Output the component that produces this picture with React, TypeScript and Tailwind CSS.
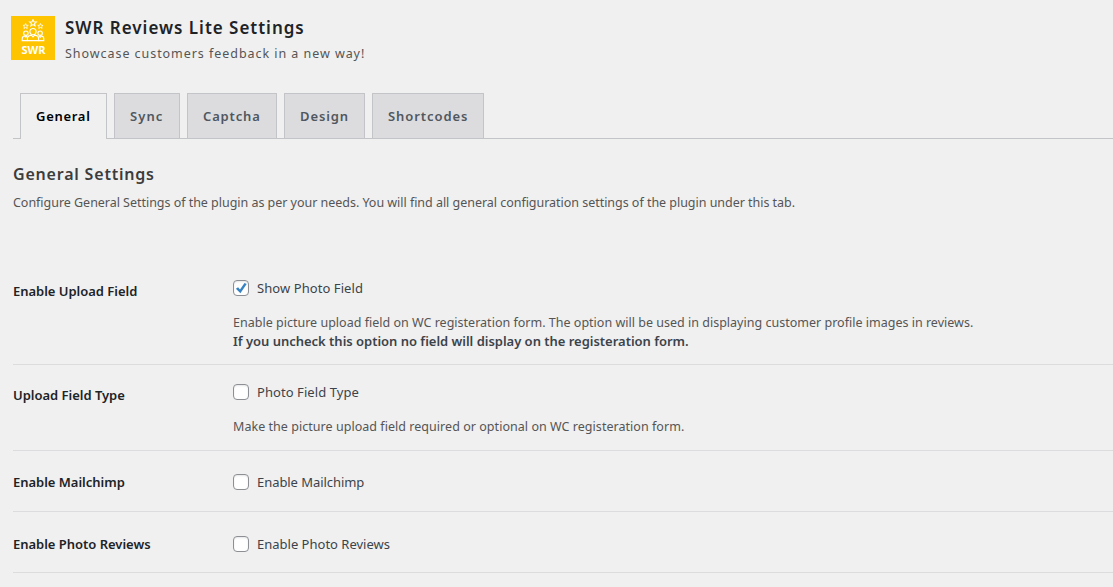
import type { ReactNode } from "react";

const tabs = [
  { label: "General", box: "w-[87px]", text: "tracking-[0.7px]", active: true },
  { label: "Sync", box: "w-[66px]", text: "tracking-[1.1px]" },
  { label: "Captcha", box: "w-[90px]", text: "tracking-[0.85px]" },
  { label: "Design", box: "w-[81px]", text: "tracking-[0.9px]" },
  { label: "Shortcodes", box: "w-[112px]", text: "tracking-[0.93px]" },
];

function Star({ x, y, s }: { x: number; y: number; s: number }) {
  return (
    <path
      transform={`translate(${x} ${y}) scale(${s})`}
      d="M0-3.6 1-1.2 3.5-1.1 1.6.6 2.2 3.1 0 1.7-2.2 3.1-1.6.6-3.5-1.1-1-1.2Z"
    />
  );
}

function Logo() {
  return (
    <div className="flex h-11 w-11 flex-col items-center bg-[#ffc400] pt-[3px] text-white">
      <svg className="shrink-0" width="24" height="23" viewBox="0 0 24 23" fill="none" stroke="#fff" strokeWidth="1.1">
        <Star x={12} y={4} s={0.95} />
        <Star x={4.6} y={7.2} s={0.75} />
        <Star x={19.4} y={7.2} s={0.75} />
        <circle cx="12" cy="12.6" r="3.1" />
        <circle cx="4.9" cy="14.2" r="2.2" />
        <circle cx="19.1" cy="14.2" r="2.2" />
        <path d="M6.4 21.6v-2c0-2.3 1.8-3.3 4-3.5L12 18l1.6-1.9c2.2.2 4 1.2 4 3.5v2Z" />
        <path d="M6.4 21.6H1.2v-1.9c0-1.700 1.100-2.500 2.400-2.700l1.300 1.200 1.300-1.200M17.600 21.600h5.200v-1.900c0-1.700-1.100-2.500-2.400-2.700l-1.300 1.200-1.300-1.200" />
      </svg>
      <span className="pl-px text-[11px] leading-[16px] font-bold">SWR</span>
    </div>
  );
}

function Checkbox({ checked }: { checked?: boolean }) {
  return (
    <span className="flex h-4 w-4 shrink-0 items-center justify-center rounded-[4px] border border-[#8c8f94] bg-white shadow-[inset_0_1px_2px_rgba(0,0,0,0.1)]">
      {checked && (
        <svg width="14" height="14" viewBox="0 0 14 14">
          <path d="M1.900 7.700 4.100 6.200l1.900 2.200L10.500 1.900l2.200 1.200L6.400 12.300Z" fill="#3582c4" />
        </svg>
      )}
    </span>
  );
}

function Row({
  title,
  label,
  checked,
  height,
  titleTop,
  boxTop,
  labelText,
  children,
}: {
  title: string;
  label: string;
  checked?: boolean;
  height: string;
  titleTop: string;
  boxTop: string;
  labelText: string;
  children?: ReactNode;
}) {
  return (
    <div className={`flex border-b border-[#dcdcde] ${height}`}>
      <div className={`w-[220px] shrink-0 text-[13px] leading-[18px] font-semibold tracking-[-0.02px] text-[#1d2327] ${titleTop}`}>
        {title}
      </div>
      <div className={boxTop}>
        <label className="flex h-4 items-center gap-2 text-[13px] text-[#3c434a]">
          <Checkbox checked={checked} />
          <span className={`pt-0.5 whitespace-nowrap ${labelText}`}>{label}</span>
        </label>
        {children}
      </div>
    </div>
  );
}

export default function App() {
  return (
    <div className="h-[587px] overflow-hidden bg-[#f0f0f0] font-['Noto_Sans','Open_Sans',sans-serif]">
      <header className="flex gap-2.5 pt-4 pl-[11px]">
        <Logo />
        <div className="whitespace-nowrap">
          <h1 className="text-[17px] leading-6 font-semibold tracking-[0.98px] text-[#1d2327]">SWR Reviews Lite Settings</h1>
          <p className="mt-1 text-[12.5px] leading-5 tracking-[0.95px] text-[#555]">Showcase customers feedback in a new way!</p>
        </div>
      </header>

      <nav className="mt-[29px] ml-[13px] flex h-[46px] gap-[7px] border-b border-[#c3c4c7] pl-[7px]">
        {tabs.map((t) => (
          <div
            key={t.label}
            className={`shrink-0 border border-b-0 border-[#c3c4c7] pl-[15px] text-[13px] leading-[45px] font-semibold ${t.box} ${t.text} ${
              t.active ? "h-[46px] bg-[#f0f0f0] text-black" : "h-[45px] bg-[#dcdcde] text-[#50575e]"
            }`}
          >
            {t.label}
          </div>
        ))}
      </nav>

      <main className="ml-[13px] whitespace-nowrap">
        <h2 className="pt-[23px] text-[16px] leading-6 font-semibold tracking-[0.8px] text-[#3c3c3c]">General Settings</h2>
        <p className="mt-[7px] text-[12.5px] leading-5 tracking-[-0.03px] text-[#555]">
          Configure General Settings of the plugin as per your needs. You will find all general configuration settings of the plugin under this tab.
        </p>

        <section className="mt-[47px]">
          <Row title="Enable Upload Field" label="Show Photo Field" checked height="h-[105px]" titleTop="pt-[22px]" boxTop="pt-5" labelText="tracking-[0.07px]">
            <p className="mt-[17px] text-[12.5px] leading-[19px] tracking-[0.01px] text-[#555]">
              Enable picture upload field on WC registeration form. The option will be used in displaying customer profile images in reviews.
            </p>
            <p className="text-[13px] leading-[19px] font-semibold tracking-[-0.02px] text-[#3c434a]">
              If you uncheck this option no field will display on the registeration form.
            </p>
          </Row>
          <Row title="Upload Field Type" label="Photo Field Type" height="h-[86px]" titleTop="pt-[21px]" boxTop="pt-[19px]" labelText="tracking-[0.07px]">
            <p className="mt-[17px] text-[12.5px] leading-[19px] tracking-[0.04px] text-[#555]">
              Make the picture upload field required or optional on WC registeration form.
            </p>
          </Row>
          <Row title="Enable Mailchimp" label="Enable Mailchimp" height="h-[61px]" titleTop="pt-[22px]" boxTop="pt-[23px]" labelText="tracking-[-0.06px]" />
          <Row title="Enable Photo Reviews" label="Enable Photo Reviews" height="h-[61px]" titleTop="pt-[23px]" boxTop="pt-6" labelText="tracking-normal" />
        </section>
      </main>
    </div>
  );
}
